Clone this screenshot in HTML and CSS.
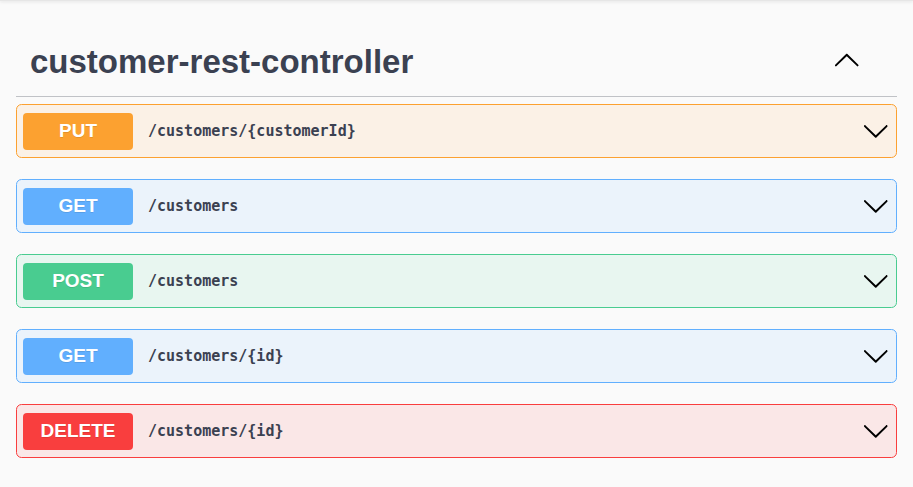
FILE: index.html
```html
<!DOCTYPE html>
<html>
<head>
<meta charset="utf-8">
<link rel="stylesheet" href="styles.css">
</head>
<body>
<div class="topshadow"></div>
<div class="wrapper">
  <div class="tag-header">
    <h3 class="tag-title">customer-rest-controller</h3>
    <svg class="arrow up" viewBox="0 0 20 20" width="27.5" height="27.5"><path d="M17.418 6.109c.272-.268.709-.268.979 0s.271.701 0 .969l-7.908 7.83c-.27.268-.707.268-.979 0l-7.908-7.83c-.27-.268-.27-.701 0-.969.271-.268.709-.268.979 0L10 13.25l7.418-7.141z"/></svg>
  </div>

  <div class="opblock put">
    <span class="method">PUT</span>
    <span class="path">/customers/{customerId}</span>
    <svg class="arrow" viewBox="0 0 20 20" width="27.5" height="27.5"><path d="M17.418 6.109c.272-.268.709-.268.979 0s.271.701 0 .969l-7.908 7.83c-.27.268-.707.268-.979 0l-7.908-7.83c-.27-.268-.27-.701 0-.969.271-.268.709-.268.979 0L10 13.25l7.418-7.141z"/></svg>
  </div>
  <div class="opblock get">
    <span class="method">GET</span>
    <span class="path">/customers</span>
    <svg class="arrow" viewBox="0 0 20 20" width="27.5" height="27.5"><path d="M17.418 6.109c.272-.268.709-.268.979 0s.271.701 0 .969l-7.908 7.83c-.27.268-.707.268-.979 0l-7.908-7.83c-.27-.268-.27-.701 0-.969.271-.268.709-.268.979 0L10 13.25l7.418-7.141z"/></svg>
  </div>
  <div class="opblock post">
    <span class="method">POST</span>
    <span class="path">/customers</span>
    <svg class="arrow" viewBox="0 0 20 20" width="27.5" height="27.5"><path d="M17.418 6.109c.272-.268.709-.268.979 0s.271.701 0 .969l-7.908 7.83c-.27.268-.707.268-.979 0l-7.908-7.83c-.27-.268-.27-.701 0-.969.271-.268.709-.268.979 0L10 13.25l7.418-7.141z"/></svg>
  </div>
  <div class="opblock get">
    <span class="method">GET</span>
    <span class="path">/customers/{id}</span>
    <svg class="arrow" viewBox="0 0 20 20" width="27.5" height="27.5"><path d="M17.418 6.109c.272-.268.709-.268.979 0s.271.701 0 .969l-7.908 7.83c-.27.268-.707.268-.979 0l-7.908-7.83c-.27-.268-.27-.701 0-.969.271-.268.709-.268.979 0L10 13.25l7.418-7.141z"/></svg>
  </div>
  <div class="opblock delete">
    <span class="method">DELETE</span>
    <span class="path">/customers/{id}</span>
    <svg class="arrow" viewBox="0 0 20 20" width="27.5" height="27.5"><path d="M17.418 6.109c.272-.268.709-.268.979 0s.271.701 0 .969l-7.908 7.83c-.27.268-.707.268-.979 0l-7.908-7.83c-.27-.268-.27-.701 0-.969.271-.268.709-.268.979 0L10 13.25l7.418-7.141z"/></svg>
  </div>
</div>
</body>
</html>
```

FILE: styles.css
```css
html, body {
  margin: 0;
  padding: 0;
  background: #fafafa;
  font-family: "Liberation Sans", Arial, sans-serif;
}

.topshadow {
  height: 1px;
  background: #e6e6e6;
  box-shadow: 0 1px 3px rgba(0, 0, 0, 0.15);
}

.wrapper {
  padding: 30px 16px 0;
}

.tag-header {
  display: flex;
  align-items: center;
  justify-content: space-between;
  height: 65px;
  padding: 0 37px 0 14px;
  border-bottom: 1px solid rgba(59, 65, 81, 0.3);
  margin-bottom: 7px;
}

.tag-title {
  margin: -3px 0 0;
  font-size: 33px;
  font-weight: bold;
  color: #3b4151;
}

.arrow {
  display: block;
  fill: #000;
  flex: none;
}

.arrow.up {
  transform: rotate(180deg);
  margin-top: -6px;
}

.opblock {
  display: flex;
  align-items: center;
  box-sizing: border-box;
  height: 54px;
  padding: 0 7px 0 6px;
  margin-bottom: 21px;
  border: 1px solid;
  border-radius: 5.5px;
}

.method {
  width: 110px;
  height: 37px;
  line-height: 36px;
  border-radius: 4px;
  text-align: center;
  color: #fff;
  font-size: 19px;
  font-weight: bold;
  text-shadow: 0 1px 0 rgba(0, 0, 0, 0.1);
  flex: none;
}

.path {
  flex: 1;
  padding: 0 15px;
  font-family: "DejaVu Sans Mono", monospace;
  font-size: 15px;
  font-weight: bold;
  color: #3b4151;
}

.put { background: #fbf1e6; border-color: #fca130; }
.put .method { background: #fca130; }

.get { background: #ebf3fb; border-color: #61affe; }
.get .method { background: #61affe; }

.post { background: #e8f6f0; border-color: #49cc90; }
.post .method { background: #49cc90; }

.delete { background: #fae7e7; border-color: #f93e3e; }
.delete .method { background: #f93e3e; }
```
